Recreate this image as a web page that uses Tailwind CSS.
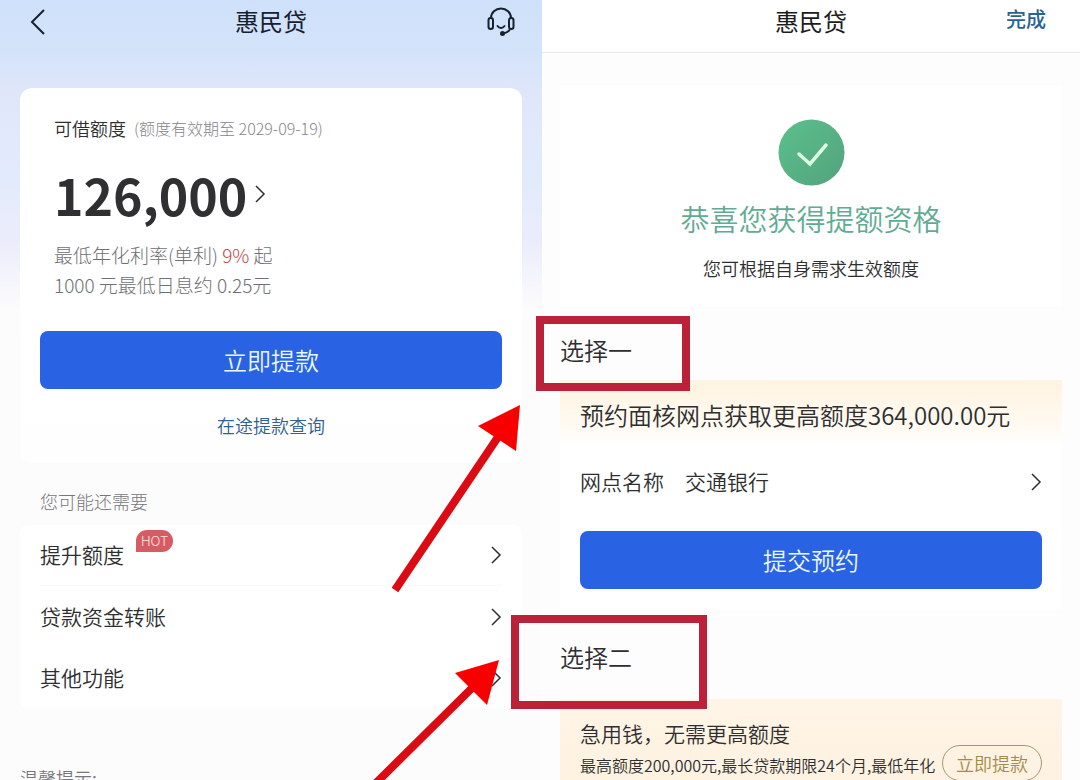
<!DOCTYPE html>
<html lang="zh-CN">
<head>
    <meta charset="UTF-8">
    <meta name="viewport" content="width=device-width, initial-scale=1.0">
    <title>惠民贷</title>
    <script src="https://cdn.jsdelivr.net/npm/@tailwindcss/browser@4"></script>
</head>
<body class="bg-white font-['Noto_Sans_CJK_SC',sans-serif] font-[350] text-[#2e2e30]">
    <div class="relative h-screen overflow-hidden grid grid-cols-[542fr_538fr]">

        <!-- Loan home -->
        <section class="min-w-0 bg-[#fcfcfd] bg-[linear-gradient(180deg,#cfe1fa_0px,#d3e3fa_50px,#dfe6fa_90px,#e2ebfb_180px,#ebecfb_240px,#fcfcfd_310px)]">
            <header class="h-11 px-6 grid grid-cols-3 items-center text-[#16202f]">
                <button type="button" aria-label="返回" class="justify-self-start pl-1">
                    <svg class="w-5 h-7" fill="none" stroke="currentColor" stroke-width="2" viewBox="0 0 20 28">
                        <path d="M16 2 4 14l12 12" />
                    </svg>
                </button>
                <h1 class="text-2xl leading-8 pb-0.5 font-normal text-center">惠民贷</h1>
                <button type="button" aria-label="客服" class="justify-self-end">
                    <svg class="w-8 h-8" fill="none" stroke="currentColor" stroke-width="2" stroke-linecap="round" viewBox="0 0 32 32">
                        <path d="M5 12a10 9.500 0 0 1 20 0" />
                        <rect x="2.500" y="12" width="4.500" height="11" rx="2.250" />
                        <rect x="23" y="12" width="4.500" height="11" rx="2.250" />
                        <path d="M11.500 20c2 2.500 5 2.500 7 0" />
                        <path d="M23.500 24c-1.500 2-3.500 3-6.500 3.500" />
                        <circle cx="16.500" cy="27.500" r="1.500" fill="currentColor" />
                    </svg>
                </button>
            </header>

            <div class="mx-5 mt-11 px-5 pt-6 pb-6 rounded-xl bg-linear-to-b from-white from-60% to-[#fefefe]">
                <div class="px-3.5">
                    <div class="flex items-center gap-2 h-8">
                        <span class="text-lg">可借额度</span>
                        <span class="text-base font-light text-[#858589]">(额度有效期至 2029-09-19)</span>
                    </div>
                    <a href="#" class="mt-4 flex items-center gap-1.5 h-[68px]">
                        <span class="text-[50px] leading-none font-bold text-[#303032]">126,000</span>
                        <svg class="w-4 h-6" fill="none" stroke="currentColor" stroke-width="1.500" viewBox="0 0 16 24">
                            <path d="M3 4l8 8-8 8" />
                        </svg>
                    </a>
                    <p class="mt-3 text-[19px] leading-[30px] font-light text-[#707074]">
                        最低年化利率(单利) <span class="text-[#c4474c]">9%</span> 起<br>
                        1000 元最低日息约 0.25元
                    </p>
                </div>
                <button type="button" class="mt-[31px] w-full h-[58px] rounded-lg bg-[#2962e2] text-2xl text-[#e9f8ff]">立即提款</button>
                <a href="#" class="mt-[22px] block text-center text-lg text-[#2f5f93]">在途提款查询</a>
            </div>

            <h2 class="mx-10 mt-6 text-lg font-light text-[#77777b]">您可能还需要</h2>

            <ul class="mx-5 mt-2.5 px-5 bg-white rounded-lg text-[21px]">
                <li class="border-b border-[#f9f9f9]">
                    <a href="#" class="flex items-center h-[60px]">
                        <span>提升额度</span>
                        <span class="ml-3 mb-7 px-[5px] h-[22px] rounded-t-full rounded-br-full rounded-bl-sm bg-[#d55c62] font-['Inter',sans-serif] text-[13px] leading-[22px] text-[#ffe3e3]">HOT</span>
                        <svg class="ml-auto w-4 h-6" fill="none" stroke="currentColor" stroke-width="1.500" viewBox="0 0 16 24">
                            <path d="M6 4l8 8-8 8" />
                        </svg>
                    </a>
                </li>
                <li>
                    <a href="#" class="flex items-center h-[61px]">
                        <span>贷款资金转账</span>
                        <svg class="ml-auto w-4 h-6" fill="none" stroke="currentColor" stroke-width="1.500" viewBox="0 0 16 24">
                            <path d="M6 4l8 8-8 8" />
                        </svg>
                    </a>
                </li>
                <li>
                    <a href="#" class="flex items-center h-[61px]">
                        <span>其他功能</span>
                        <svg class="ml-auto w-4 h-6" fill="none" stroke="currentColor" stroke-width="1.500" viewBox="0 0 16 24">
                            <path d="M6 4l8 8-8 8" />
                        </svg>
                    </a>
                </li>
            </ul>

            <p class="mx-5 mt-14 text-lg text-[#77777b]">温馨提示:</p>
        </section>

        <!-- Quota result -->
        <section class="min-w-0 bg-[#fdfdfd]">
            <header class="h-[53px] px-8 pb-2.5 grid grid-cols-3 items-center bg-white border-b border-[#e9ecef] text-[#1c1c1e]">
                <h1 class="col-start-2 text-2xl font-normal text-center">惠民贷</h1>
                <button type="button" class="justify-self-end text-xl leading-none pr-0.5 pb-1 font-medium text-[#2a6391]">完成</button>
            </header>

            <div class="mx-[18px] mt-8 pt-[34px] h-[222px] flex flex-col items-center bg-white">
                <svg class="w-[67px] h-[67px]" viewBox="0 0 67 67">
                    <defs>
                        <linearGradient id="ok" x1="0" y1="0" x2="1" y2="1">
                            <stop offset="0" stop-color="#5cc08c" />
                            <stop offset="1" stop-color="#52a37c" />
                        </linearGradient>
                    </defs>
                    <circle cx="33.500" cy="33.500" r="33" fill="url(#ok)" />
                    <path d="M21 35l11 10 16-19" fill="none" stroke="#dcffe6" stroke-width="3.500" stroke-linecap="round" />
                </svg>
                <h2 class="mt-3.5 text-[29px] leading-9 text-[#5fac93]">恭喜您获得提额资格</h2>
                <p class="mt-[18px] text-lg">您可根据自身需求生效额度</p>
            </div>

            <h3 class="relative mx-[18px] mt-[25px] h-9 text-2xl leading-9">
                选择一
                <span class="absolute z-10 -left-6 -top-4 w-[154px] h-[75px] border-8 border-[#bb2139]"></span>
            </h3>

            <div class="mx-[18px] mt-3 pb-5 bg-white">
                <div class="h-[66px] px-5 pt-1 flex items-center bg-[linear-gradient(180deg,#fff3e0,#fffaf2_70%,#fff)]">
                    <p class="text-2xl whitespace-nowrap">预约面核网点获取更高额度364,000.00元</p>
                </div>
                <div class="px-5">
                    <a href="#" class="flex items-center gap-[21px] h-[71px] text-[21px]">
                        <span>网点名称</span>
                        <span>交通银行</span>
                        <svg class="ml-auto w-4 h-6" fill="none" stroke="currentColor" stroke-width="1.500" viewBox="0 0 16 24">
                            <path d="M6 4l8 8-8 8" />
                        </svg>
                    </a>
                    <button type="button" class="mt-3.5 w-full h-[58px] rounded-lg bg-[#2962e2] text-2xl text-[#e9f8ff]">提交预约</button>
                </div>
            </div>

            <h3 class="relative mx-[18px] mt-[30px] h-9 text-2xl leading-9">
                选择二
                <span class="absolute z-10 -left-[49px] -top-6 w-[196px] h-[94px] border-8 border-[#bb2139]"></span>
            </h3>

            <div class="mx-[18px] mt-6 px-5 pt-4 h-32 bg-[linear-gradient(180deg,#fff5e6,#fdf0de)]">
                <h4 class="text-[21px] leading-9">急用钱，无需更高额度</h4>
                <div class="flex items-start justify-between">
                    <p class="pt-0.5 text-base whitespace-nowrap">最高额度200,000元,最长贷款期限24个月,最低年化</p>
                    <button type="button" class="-mt-1.5 shrink-0 w-[100px] h-9 rounded-full border border-[#a8956f] text-lg text-[#a58a4c] whitespace-nowrap">立即提款</button>
                </div>
            </div>
        </section>

        <!-- Marker arrows -->
        <svg class="absolute left-0 top-0 z-20 w-[1080px] h-[780px] pointer-events-none" viewBox="0 0 1080 780">
            <path d="M395 590 498 437M376 783 473 687" fill="none" stroke="#dc0a12" stroke-width="8" />
            <path d="M520 405 478 426 516 451zM499 660 455 673 487 705z" fill="#f80000" />
        </svg>
    </div>
</body>
</html>
